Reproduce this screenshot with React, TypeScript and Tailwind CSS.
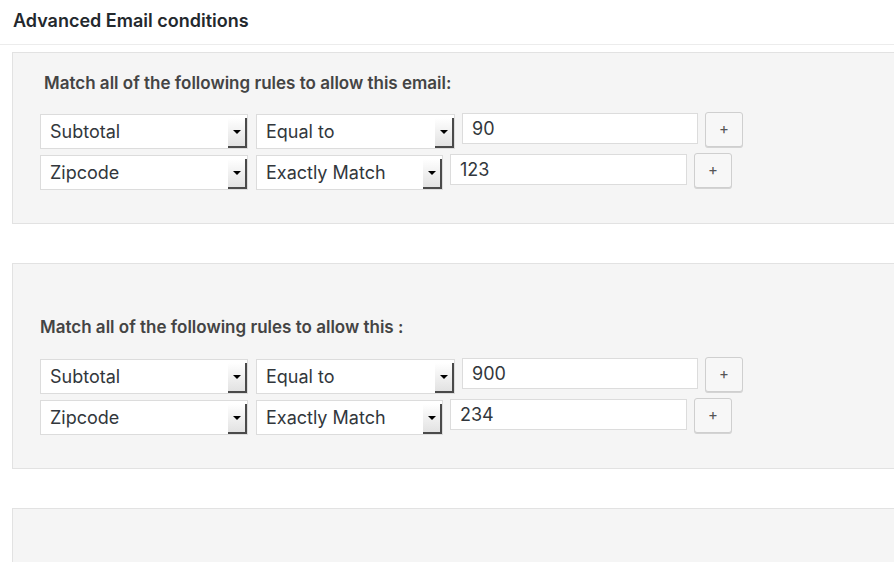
import { ReactNode } from "react";

type Rule = { field: string; op: string; value: string; opWidth: string; inputWidth: string };

const font = { fontFamily: "Inter, 'Liberation Sans', sans-serif" };

function Select({ label, width }: { label: string; width: string }) {
  return (
    <div className={`mt-[2px] flex h-[35px] items-stretch border border-[#dcdcdc] bg-white ${width}`}>
      <span className="flex flex-1 items-center pl-[9px] text-[18px] text-[#32373c]">{label}</span>
      <div className="mt-[3px] flex w-[19px] items-center justify-center border-b-2 border-r-2 border-[#4a4a4a] bg-gradient-to-b from-white to-[#e2e2e2]">
        <span className="h-0 w-0 border-x-[4px] border-t-[4px] border-x-transparent border-t-black" />
      </div>
    </div>
  );
}

function PlusButton() {
  return (
    <button className="flex h-[35px] w-[38px] items-center justify-center rounded-[3px] border border-[#cfcfcf] bg-[#f7f7f7] text-[15px] text-[#555] shadow-[0_1px_0_#d4d4d4]">
      +
    </button>
  );
}

function RuleRow({ rule }: { rule: Rule }) {
  return (
    <div className="flex items-start">
      <Select label={rule.field} width="w-[208px]" />
      <div className="ml-[8px]">
        <Select label={rule.op} width={rule.opWidth} />
      </div>
      <div
        className={`ml-[7px] mt-[1px] flex h-[31px] items-center border border-[#dcdcdc] bg-white pl-[9px] text-[18px] text-[#32373c] ${rule.inputWidth}`}
      >
        {rule.value}
      </div>
      <div className="ml-[7px]">
        <PlusButton />
      </div>
    </div>
  );
}

function Panel({ children, className }: { children: ReactNode; className?: string }) {
  return (
    <div className={`w-[900px] border border-[#e2e2e2] bg-[#f5f5f5] ${className || ""}`}>{children}</div>
  );
}

export default function App() {
  const first: Rule[] = [
    { field: "Subtotal", op: "Equal to", value: "90", opWidth: "w-[199px]", inputWidth: "w-[236px]" },
    { field: "Zipcode", op: "Exactly Match", value: "123", opWidth: "w-[187px]", inputWidth: "w-[237px]" },
  ];
  const second: Rule[] = [
    { field: "Subtotal", op: "Equal to", value: "900", opWidth: "w-[199px]", inputWidth: "w-[236px]" },
    { field: "Zipcode", op: "Exactly Match", value: "234", opWidth: "w-[187px]", inputWidth: "w-[237px]" },
  ];

  return (
    <div className="h-[562px] w-full overflow-hidden bg-white" style={font}>
      <div className="flex h-[45px] items-center border-b border-[#ececec] pl-[13px] pb-[4px] text-[18px] font-semibold text-[#23282d]">
        Advanced Email conditions
      </div>

      <div className="flex flex-col pl-[12px] pt-[7px]">
        <Panel className="h-[172px] pl-[27px] pt-[19px]">
          <h3 className="pl-[4px] text-[17px] font-semibold leading-[22px] text-[#444]">
            Match all of the following rules to allow this email:
          </h3>
          <div className="mt-[18px] flex flex-col gap-[4px]">
            {first.map((r) => (
              <RuleRow key={r.field} rule={r} />
            ))}
          </div>
        </Panel>

        <Panel className="mt-[39px] h-[206px] pl-[27px] pt-[52px]">
          <h3 className="text-[17px] font-semibold leading-[22px] text-[#444]">
            Match all of the following rules to allow this :
          </h3>
          <div className="mt-[19px] flex flex-col gap-[4px]">
            {second.map((r) => (
              <RuleRow key={r.field} rule={r} />
            ))}
          </div>
        </Panel>

        <Panel className="mt-[39px] h-[80px]" />
      </div>
    </div>
  );
}
